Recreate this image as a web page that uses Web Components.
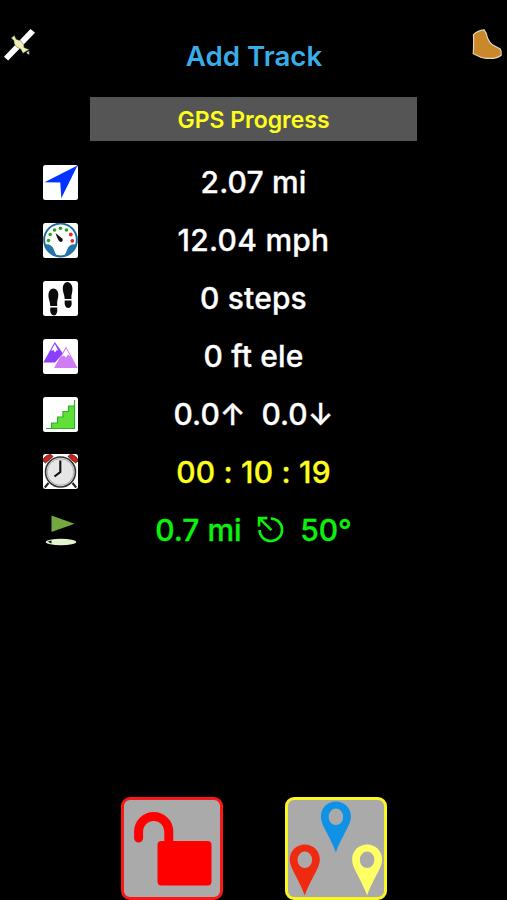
<!DOCTYPE html>
<html lang="en">
<head>
<meta charset="utf-8">
<title>Add Track</title>
<style>
    html, body {
        margin: 0;
        background: #000;
    }
</style>
</head>
<body>
<track-screen></track-screen>

<script>
const ICONS = {
    satellite: `<svg viewBox="0 0 36 36">
        <path d="M2 30.500 L29.300 2 L34 6 L6.300 34.500 Z" fill="#fff"/>
        <path d="M9.500 11.300 L12.700 8.800 L14.500 12.500 L19.500 14.300 L22.500 18.500 L22.500 21 L28 23.300 L25.500 24.500 L21.500 27 L19.500 22.800 L15.300 20.800 L12.700 17.500 L12.300 14 Z" fill="#eceeb2" stroke="#55563c" stroke-width=".5"/>
        <path d="M25.500 25.500 L28 28 M28 25 L26 27.500" stroke="#ccc" stroke-width="1.200"/>
    </svg>`,
    boot: `<svg viewBox="0 0 36 36">
        <path d="M2.500 8 Q7 3.500 13.500 3 L15.800 7 Q17 13.500 21.500 18 L30 22.500 Q31.700 25 31 29 Q27 32.500 19 32.300 Q12 32.300 9 30.500 L2.300 27.500 Q3 16 2.500 8Z" fill="#c98829" stroke="#e6d5bb" stroke-width="1.200"/>
    </svg>`,
    arrow: `<svg viewBox="0 0 35 35">
        <rect width="35" height="35" rx="2.500" fill="#fff"/>
        <path d="M34.500 .5 L18.300 33.200 L17.300 17.500 L1.500 17.200 Z" fill="#0433ff"/>
    </svg>`,
    gauge: `<svg viewBox="0 0 35 35">
        <rect width="35" height="35" rx="2.500" fill="#fff"/>
        <circle cx="17.500" cy="17" r="16.400" fill="#fff" stroke="#1c6a9c" stroke-width="2"/>
        <path d="M1.500 21.500 Q9 20.500 11 27 Q12 31 15 33.500 Q5 33 1.500 21.500Z M33.500 21.500 Q26 20.500 24 27 Q23 31 20 33.500 Q30 33 33.500 21.500Z" fill="#2474a8"/>
        <g fill="#23a51f">
            <circle cx="5.500" cy="17.500" r="1.800"/><circle cx="7.200" cy="11.500" r="1.800"/>
            <circle cx="11.500" cy="7" r="1.800"/><circle cx="17.500" cy="5.300" r="1.800"/><circle cx="23.500" cy="7" r="1.800"/>
        </g>
        <circle cx="27.800" cy="11.500" r="1.900" fill="#e3262e"/><circle cx="29.300" cy="17.800" r="1.900" fill="#e3262e"/>
        <path d="M12.500 10 L19.500 15.700 Q20.500 18.500 17.500 19 Q15.300 18.500 12.500 10Z" fill="#111"/>
    </svg>`,
    steps: `<svg viewBox="0 0 35 35">
        <rect width="35" height="35" rx="2.500" fill="#fff"/>
        <g fill="#0a0a0a">
            <path d="M10.800 7.500 C15 8 16.200 13 14.700 18 Q13.800 21 14.200 25 H7.300 Q7 21 5.900 18 C4.500 12 6.500 7.500 10.800 7.500Z"/>
            <path d="M7.300 26.500 H14.200 Q15 34.300 10.800 34.500 Q6.500 34 7.300 26.500Z"/>
            <path d="M24.500 1 C29 1.500 30.300 7 29 12 Q28 15 28.500 18 H21.700 Q21.500 15 20.500 12 C18.700 6 20.500 1 24.500 1Z"/>
            <path d="M21.700 19.500 H28.500 Q29.500 26.800 25.300 27 Q21 26.800 21.700 19.500Z"/>
        </g>
    </svg>`,
    mountains: `<svg viewBox="0 0 35 35">
        <rect width="35" height="35" rx="2.500" fill="#fff"/>
        <path d="M11.800 3 L.3 23.500 H12 L20 14.500 Z" fill="#8a3ffc"/>
        <path d="M11.800 5 L8 12 L10.500 11 L12 13.500 L14 10.800 L15.500 12 Z" fill="#fff"/>
        <path d="M23 7.500 L11 29 H34.700 Z" fill="#d07cf5"/>
        <path d="M23 9.500 L18.500 17.800 L21 16.500 L23 18.500 L25 15.500 L27.500 17.500 Z" fill="#fff"/>
    </svg>`,
    stairs: `<svg viewBox="0 0 35 35">
        <rect width="35" height="35" rx="2.500" fill="#fff"/>
        <path d="M3 31.500 H8.500 V26 H14.500 V20 H20 V14.500 H25.500 V9 H31.500 V3 V31.500 Z" fill="#5fe038" stroke="#32ad2c" stroke-width="1.200"/>
    </svg>`,
    clock: `<svg viewBox="0 0 35 35">
        <rect width="35" height="35" rx="2.500" fill="#fff"/>
        <path d="M0 7 Q1 1 8 .5 L10 2.500 L2.500 9Z M35 7 Q34 1 27 .5 L25 2.500 L32.500 9Z" fill="#c9251c" stroke="#501512" stroke-width=".8"/>
        <path d="M5.500 29 L1.800 33.500 M29.500 29 L33.200 33.500" stroke="#222" stroke-width="2"/>
        <circle cx="17.500" cy="18" r="15" fill="#e6e6e6" stroke="#333" stroke-width="1.600"/>
        <circle cx="17.500" cy="18" r="13.300" fill="none" stroke="#aaa"/>
        <path d="M17.300 6.500 V18 L11.500 22.500" fill="none" stroke="#111" stroke-width="2.100"/>
    </svg>`,
    flag: `<svg viewBox="0 0 35 35">
        <path d="M8.500 3.500 L31.500 11.800 L8.500 20 Z" fill="#73a840"/>
        <ellipse cx="18" cy="30" rx="15.300" ry="3.200" fill="#e2f3cf"/>
        <path d="M5 29.300 L8.500 28.500 V31.500 L6.500 30.800Z" fill="#10200a"/>
    </svg>`,
    bearing: `<svg viewBox="0 0 28 28">
        <g fill="none" stroke="currentColor" stroke-width="2.700">
            <path d="M14.300 2.600 A11.700 11.700 0 1 1 2.600 14.600"/>
            <path d="M3.200 3.200 L15 14.600 M2.100 11 V2.200 H10.800"/>
        </g>
    </svg>`,
    unlock: `<svg viewBox="1 1 96 97">
        <path d="M15.600 39 V32.500 A15.100 15.100 0 0 1 45.800 32.500 V46" fill="none" stroke="#f00" stroke-width="9" stroke-linecap="round"/>
        <rect x="34.500" y="42" width="54" height="44.500" rx="4" fill="#f00"/>
    </svg>`,
    pins: `<svg viewBox="1 1 96 97">
        <defs><path id="pin" fill-rule="evenodd" d="M0 0 C8.500 0 15 6.500 15 15 C15 24 7 32 0 51 C-7 32 -15 24 -15 15 C-15 6.500 -8.500 0 0 0Z M0 7 A7.300 8.300 0 1 0 0 23.600 A7.300 8.300 0 1 0 0 7Z"/></defs>
        <use href="#pin" x="48.900" y="2.500" fill="#0f92e6"/>
        <use href="#pin" x="17.800" y="45.500" fill="#f02a10"/>
        <use href="#pin" x="80.100" y="45.500" fill="#ffff66"/>
    </svg>`
};

class TrackIcon extends HTMLElement {
    connectedCallback() {
        this.attachShadow({ mode: 'open' });
        this.shadowRoot.innerHTML = `
            <style>
                :host {
                    display: flex;
                    flex: none;
                    width: 35px;
                    height: 35px;
                    white-space: normal;
                }

                svg {
                    width: 100%;
                    height: 100%;
                }
            </style>
            ${ICONS[this.getAttribute('name')]}
        `;
    }
}

class TrackHeader extends HTMLElement {
    connectedCallback() {
        this.attachShadow({ mode: 'open' });
        this.shadowRoot.innerHTML = `
            <style>
                :host {
                    display: flex;
                    justify-content: space-between;
                    height: 97px;
                    padding: 27px 1px 0 2px;
                    box-sizing: border-box;
                }

                h1 {
                    margin: 10.500px 0 0;
                    color: #3aade8;
                    font-size: 27.700px;
                    font-weight: 600;
                    line-height: 36px;
                    white-space: nowrap;
                }
            </style>
            <track-icon name="satellite"></track-icon>
            <h1><slot></slot></h1>
            <track-icon name="boot"></track-icon>
        `;
    }
}

class TrackBanner extends HTMLElement {
    connectedCallback() {
        this.attachShadow({ mode: 'open' });
        this.shadowRoot.innerHTML = `
            <style>
                :host {
                    display: block;
                    width: 327px;
                    height: 44px;
                    margin: 0 auto 12.500px;
                    background: #555;
                    color: #ffff1c;
                    font-size: 23px;
                    font-weight: 600;
                    line-height: 46px;
                    text-align: center;
                }
            </style>
            <slot></slot>
        `;
    }
}

class TrackStat extends HTMLElement {
    connectedCallback() {
        this.attachShadow({ mode: 'open' });
        this.shadowRoot.innerHTML = `
            <style>
                :host {
                    display: grid;
                    grid-template-columns: 35px 1fr 35px;
                    align-items: center;
                    height: 57.900px;
                    padding: 0 43px;
                    color: var(--stat-color, #fff);
                    font-size: 30px;
                    font-weight: 500;
                    letter-spacing: 0.150px;
                    -webkit-text-stroke: 0.300px currentColor;
                }

                .value {
                    display: flex;
                    justify-content: center;
                    align-items: center;
                    white-space: pre;
                }
            </style>
            <track-icon name="${this.getAttribute('icon')}"></track-icon>
            <div class="value"><slot></slot></div>
        `;
    }
}

class TrackButton extends HTMLElement {
    connectedCallback() {
        this.attachShadow({ mode: 'open' });
        this.shadowRoot.innerHTML = `
            <style>
                :host {
                    display: block;
                    width: 96px;
                    height: 97px;
                    border: 3px solid var(--button-border);
                    border-radius: 9px;
                    background: #aaa;
                }

                track-icon {
                    width: 96px;
                    height: 97px;
                }
            </style>
            <track-icon name="${this.getAttribute('icon')}"></track-icon>
        `;
    }
}

class TrackScreen extends HTMLElement {
    connectedCallback() {
        this.attachShadow({ mode: 'open' });
        this.shadowRoot.innerHTML = `
            <style>
                :host {
                    display: flex;
                    flex-direction: column;
                    height: 900px;
                    overflow: hidden;
                    background: #000;
                    font-family: Inter, "Liberation Sans", sans-serif;
                }

                .speed { letter-spacing: 0.250px; }
                .climb { letter-spacing: 0; }

                .time {
                    --stat-color: #ffff1c;
                    letter-spacing: 0.200px;
                }

                .target {
                    --stat-color: #0df20d;
                    letter-spacing: 0;
                }

                .bearing {
                    width: 27px;
                    height: 27px;
                    margin: 0 16px 1px 15.500px;
                }

                .actions {
                    display: flex;
                    justify-content: center;
                    gap: 62px;
                    margin-top: auto;
                }

                .lock { --button-border: #f81818; }
                .pins { --button-border: #f8f820; }
            </style>
            <track-header>Add Track</track-header>
            <track-banner>GPS Progress</track-banner>
            <track-stat icon="arrow"><span>2.07 mi</span></track-stat>
            <track-stat icon="gauge" class="speed"><span>12.04 mph</span></track-stat>
            <track-stat icon="steps"><span>0 steps</span></track-stat>
            <track-stat icon="mountains"><span>0 ft ele</span></track-stat>
            <track-stat icon="stairs" class="climb"><span>0.0↑  0.0↓</span></track-stat>
            <track-stat icon="clock" class="time"><span>00 : 10 : 19</span></track-stat>
            <track-stat icon="flag" class="target"><span>0.7 mi</span><track-icon name="bearing" class="bearing"></track-icon><span>50°</span></track-stat>
            <div class="actions">
                <track-button icon="unlock" class="lock"></track-button>
                <track-button icon="pins" class="pins"></track-button>
            </div>
        `;
    }
}

customElements.define('track-icon', TrackIcon);
customElements.define('track-header', TrackHeader);
customElements.define('track-banner', TrackBanner);
customElements.define('track-stat', TrackStat);
customElements.define('track-button', TrackButton);
customElements.define('track-screen', TrackScreen);
</script>
</body>
</html>
